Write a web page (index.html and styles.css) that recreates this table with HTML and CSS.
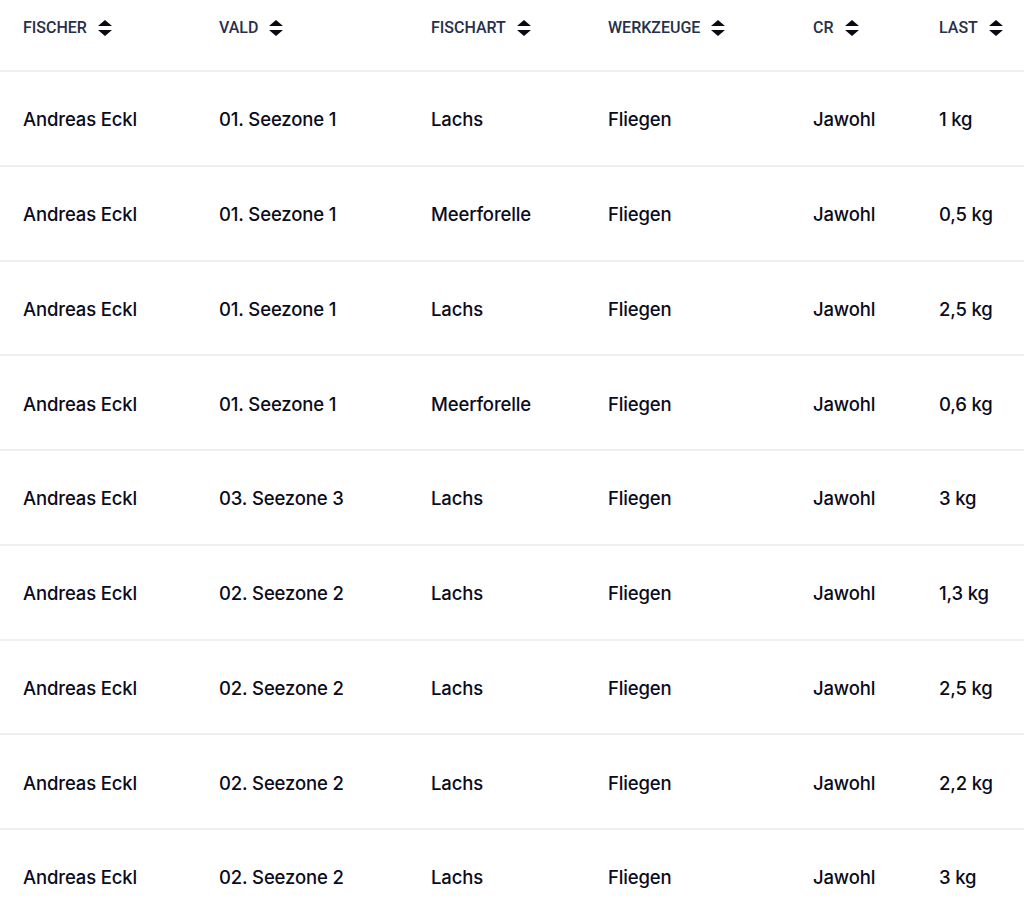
FILE: index.html
```html
<!DOCTYPE html>
<html lang="de">
<head>
<meta charset="utf-8">
<title>Fänge</title>
<link rel="stylesheet" href="styles.css">
</head>
<body>
<div class="table">
  <div class="row head">
    <div class="cell">FISCHER <svg class="sort" viewBox="0 0 14 16"><path d="M7 0 L14 6 H0 Z M0 10 H14 L7 16 Z"/></svg></div>
    <div class="cell">VALD <svg class="sort" viewBox="0 0 14 16"><path d="M7 0 L14 6 H0 Z M0 10 H14 L7 16 Z"/></svg></div>
    <div class="cell">FISCHART <svg class="sort" viewBox="0 0 14 16"><path d="M7 0 L14 6 H0 Z M0 10 H14 L7 16 Z"/></svg></div>
    <div class="cell">WERKZEUGE <svg class="sort" viewBox="0 0 14 16"><path d="M7 0 L14 6 H0 Z M0 10 H14 L7 16 Z"/></svg></div>
    <div class="cell">CR <svg class="sort" viewBox="0 0 14 16"><path d="M7 0 L14 6 H0 Z M0 10 H14 L7 16 Z"/></svg></div>
    <div class="cell">LAST <svg class="sort" viewBox="0 0 14 16"><path d="M7 0 L14 6 H0 Z M0 10 H14 L7 16 Z"/></svg></div>
  </div>
  <div class="row"><div class="cell">Andreas Eckl</div><div class="cell">01. Seezone 1</div><div class="cell">Lachs</div><div class="cell">Fliegen</div><div class="cell">Jawohl</div><div class="cell">1 kg</div></div>
  <div class="row"><div class="cell">Andreas Eckl</div><div class="cell">01. Seezone 1</div><div class="cell">Meerforelle</div><div class="cell">Fliegen</div><div class="cell">Jawohl</div><div class="cell">0,5 kg</div></div>
  <div class="row"><div class="cell">Andreas Eckl</div><div class="cell">01. Seezone 1</div><div class="cell">Lachs</div><div class="cell">Fliegen</div><div class="cell">Jawohl</div><div class="cell">2,5 kg</div></div>
  <div class="row"><div class="cell">Andreas Eckl</div><div class="cell">01. Seezone 1</div><div class="cell">Meerforelle</div><div class="cell">Fliegen</div><div class="cell">Jawohl</div><div class="cell">0,6 kg</div></div>
  <div class="row"><div class="cell">Andreas Eckl</div><div class="cell">03. Seezone 3</div><div class="cell">Lachs</div><div class="cell">Fliegen</div><div class="cell">Jawohl</div><div class="cell">3 kg</div></div>
  <div class="row"><div class="cell">Andreas Eckl</div><div class="cell">02. Seezone 2</div><div class="cell">Lachs</div><div class="cell">Fliegen</div><div class="cell">Jawohl</div><div class="cell">1,3 kg</div></div>
  <div class="row"><div class="cell">Andreas Eckl</div><div class="cell">02. Seezone 2</div><div class="cell">Lachs</div><div class="cell">Fliegen</div><div class="cell">Jawohl</div><div class="cell">2,5 kg</div></div>
  <div class="row"><div class="cell">Andreas Eckl</div><div class="cell">02. Seezone 2</div><div class="cell">Lachs</div><div class="cell">Fliegen</div><div class="cell">Jawohl</div><div class="cell">2,2 kg</div></div>
  <div class="row"><div class="cell">Andreas Eckl</div><div class="cell">02. Seezone 2</div><div class="cell">Lachs</div><div class="cell">Fliegen</div><div class="cell">Jawohl</div><div class="cell">3 kg</div></div>
</div>
</body>
</html>
```
FILE: styles.css
```css
html, body {
  margin: 0;
  padding: 0;
  background: #ffffff;
}
body {
  font-family: Inter, "Noto Sans", sans-serif;
  overflow: hidden;
}
.table {
  width: 1060px;
}
.row {
  display: grid;
  grid-template-columns: 196px 212px 177px 205px 126px 144px;
  height: 92.75px;
  align-items: center;
  border-bottom: 2px solid #efefef;
}
.row.head {
  height: 70px;
  align-items: start;
}
.cell {
  padding-left: 23px;
  padding-top: 2px;
  font-size: 18.5px;
  font-weight: 500;
  letter-spacing: -0.15px;
  color: #0b0b1c;
  white-space: nowrap;
}
.head .cell {
  padding-top: 19px;
  font-family: Roboto, sans-serif;
  font-size: 16px;
  font-weight: 500;
  letter-spacing: 0;
  color: #27304a;
  display: flex;
  align-items: center;
  gap: 11px;
  line-height: 18px;
}
.sort {
  width: 14px;
  height: 16px;
  fill: #0a0a14;
}
```
